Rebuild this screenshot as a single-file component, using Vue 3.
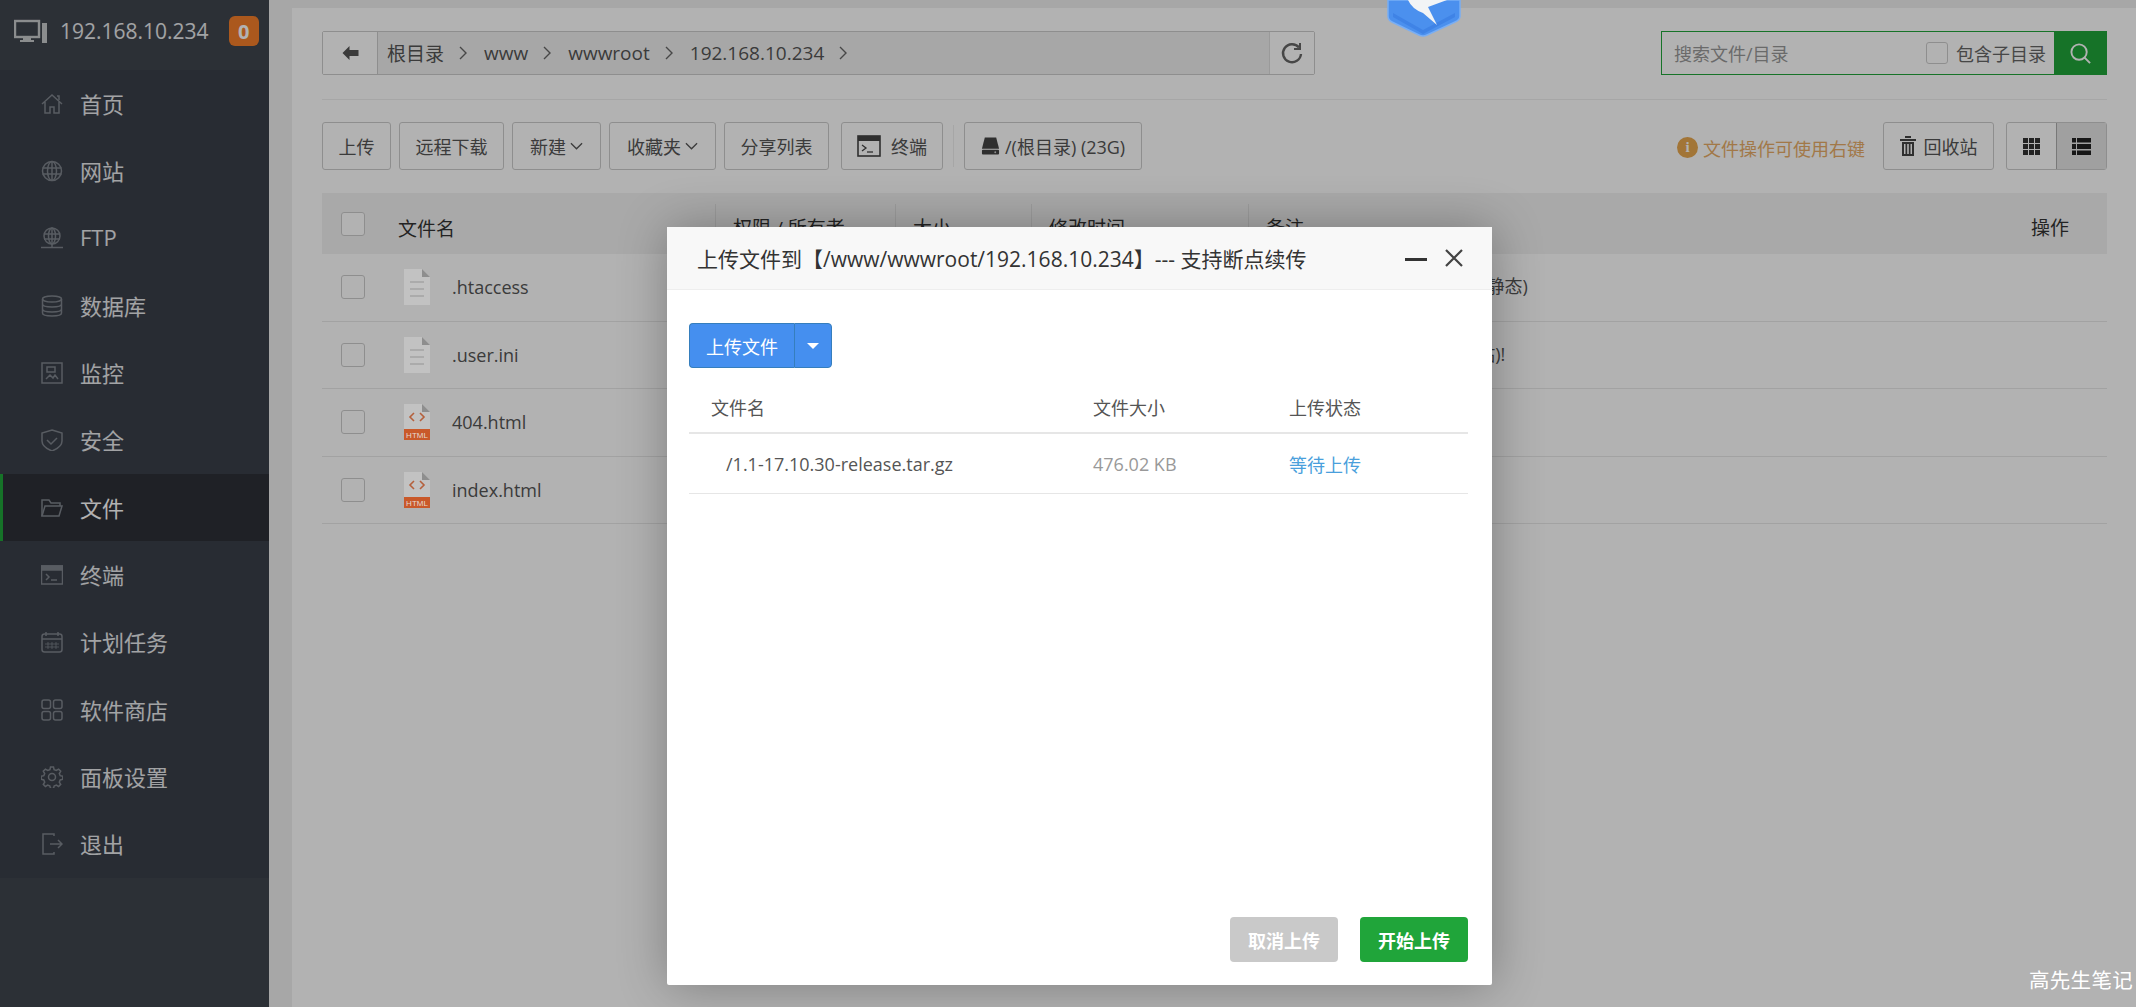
<template>
  <div class="page">
    <aside class="side">
      <div class="side-top">
        <svg class="pc" viewBox="0 0 34 24" width="34" height="24">
          <rect x="1" y="2" width="24" height="16" fill="none" stroke="currentColor" stroke-width="2.4" />
          <rect x="9" y="18" width="8" height="3" fill="currentColor" />
          <rect x="6" y="21" width="14" height="2" fill="currentColor" />
          <rect x="28" y="4" width="5" height="20" fill="currentColor" />
        </svg>
        <span class="ip">192.168.10.234</span>
        <span class="badge">0</span>
      </div>
      <nav class="menu">
        <a v-for="m in menu" :key="m.name" class="menu-item" :class="{ active: m.name === '文件' }">
          <svg class="menu-ico" viewBox="0 0 22 22" width="22" height="22" fill="none" stroke="currentColor" stroke-width="1.5" v-html="m.icon"></svg>
          <span>{{ m.name }}</span>
        </a>
      </nav>
    </aside>

    <main class="main">
      <div class="panel">
        <div class="top-row">
          <div class="path">
            <button class="back">
              <svg viewBox="0 0 16 14" width="17" height="14"><path d="M0 7 7 0v4h9v6H7v4z" fill="#555" /></svg>
            </button>
            <div class="crumbs">
              <template v-for="c in crumbs" :key="c">
                <span class="crumb">{{ c }}</span>
                <svg class="chev" viewBox="0 0 8 14" width="8" height="14"><path d="M1 1l6 6-6 6" fill="none" stroke="#666" stroke-width="1.4" /></svg>
              </template>
            </div>
            <button class="refresh">
              <svg viewBox="0 0 24 24" width="24" height="24" fill="none" stroke="#666" stroke-width="2.4">
                <path d="M19 6.5A9 9 0 1 0 21 13" />
                <path d="M20 2v6h-6" stroke-width="2" />
              </svg>
            </button>
          </div>
          <div class="search">
            <input class="search-input" placeholder="搜索文件/目录" />
            <span class="check small"></span>
            <span class="sub">包含子目录</span>
            <span class="search-btn">
              <svg viewBox="0 0 24 24" width="23" height="23" fill="none" stroke="#fff" stroke-width="2">
                <circle cx="10.5" cy="10.5" r="8" />
                <path d="M16 16l6 6" />
              </svg>
            </span>
          </div>
        </div>

        <div class="tools">
          <button class="btn">上传</button>
          <button class="btn">远程下载</button>
          <button class="btn narrow">新建
            <svg viewBox="0 0 14 8" width="13" height="8"><path d="M1 1l6 6 6-6" fill="none" stroke="#555" stroke-width="1.4" /></svg>
          </button>
          <button class="btn narrow">收藏夹
            <svg viewBox="0 0 14 8" width="13" height="8"><path d="M1 1l6 6 6-6" fill="none" stroke="#555" stroke-width="1.4" /></svg>
          </button>
          <button class="btn">分享列表</button>
          <button class="btn term">
            <svg viewBox="0 0 24 22" width="24" height="22">
              <rect x="1" y="1" width="22" height="20" fill="none" stroke="#444" stroke-width="1.6" />
              <rect x="1" y="1" width="22" height="5" fill="#444" />
              <path d="M5 10l4 3-4 3" fill="none" stroke="#444" stroke-width="1.3" />
              <path d="M10 17h6" stroke="#444" stroke-width="1.3" />
            </svg>
            终端
          </button>
          <span class="sep"></span>
          <button class="btn disk">
            <svg viewBox="0 0 20 18" width="19" height="18">
              <path d="M4 0h12l3 12H1z" fill="#444" />
              <rect x="1" y="13" width="18" height="5" rx="1" fill="#444" />
              <circle cx="15" cy="15.500" r="1" fill="#ccc" />
            </svg>
            /(根目录) (23G)
          </button>
          <span class="hint">
            <i class="hint-ico">i</i>
            文件操作可使用右键
          </span>
          <button class="btn bin">
            <svg viewBox="0 0 16 20" width="16" height="20" fill="#444">
              <rect x="5" y="0" width="6" height="2" />
              <rect x="0" y="3" width="16" height="2" />
              <path d="M2 6h12v14H2zM4 8v10h1.500V8zM7.200 8v10h1.600V8zM10.500 8v10H12V8z" fill-rule="evenodd" />
            </svg>
            回收站
          </button>
          <div class="views">
            <span class="view">
              <svg viewBox="0 0 17 17" width="17" height="17" fill="#333">
                <path d="M0 0h5v5H0zM6 0h5v5H6zM12 0h5v5h-5zM0 6h5v5H0zM6 6h5v5H6zM12 6h5v5h-5zM0 12h5v5H0zM6 12h5v5H6zM12 12h5v5h-5z" />
              </svg>
            </span>
            <span class="view on">
              <svg viewBox="0 0 19 17" width="19" height="17" fill="#222">
                <path d="M0 0h4v4.500H0zM5 0h14v4.500H5zM0 6h4v5H0zM5 6h14v5H5zM0 12.500h4V17H0zM5 12.500h14V17H5z" />
              </svg>
            </span>
          </div>
        </div>

        <div class="table">
          <div class="row head">
            <span class="cell-check"><span class="check"></span></span>
            <span class="head-name">文件名</span>
            <span class="col">权限 / 所有者</span>
            <span class="col">大小</span>
            <span class="col">修改时间</span>
            <span class="col">备注</span>
            <span class="col last">操作</span>
          </div>
          <div v-for="f in files" :key="f.name" class="row">
            <span class="cell-check"><span class="check"></span></span>
            <span class="file">
              <svg class="file-ico" viewBox="0 0 26 36" width="26" height="36">
                <path d="M0 0h18l8 8v28H0z" fill="#c2c2c2" />
                <path d="M18 0l8 8h-8z" fill="#8e8e8e" />
                <template v-if="f.html">
                  <path d="M10 9l-4 4 4 4M16 9l4 4-4 4" fill="none" stroke="#b5603c" stroke-width="1.600" />
                  <rect y="25" width="26" height="11" fill="#c9592a" />
                  <text x="13" y="34" text-anchor="middle" font-size="8" fill="#e4d8d0" font-family="Liberation Sans, sans-serif">HTML</text>
                </template>
                <path v-else d="M6 13h14M6 20h14M6 27h14" stroke="#a4a4a4" stroke-width="1.500" />
              </svg>
              {{ f.name }}
            </span>
            <span class="col"></span>
            <span class="col"></span>
            <span class="col"></span>
            <span class="col remark">{{ f.remark }}</span>
          </div>
        </div>
      </div>
    </main>

    <div class="shade"></div>

    <svg class="logo" viewBox="0 0 78 38" width="78" height="38">
      <path d="M3 0v16q0 4 4 6l27 13q4 2 8 0l28-13q5-2 5-6V0z" fill="#4b90ee" stroke="#78aef5" stroke-width="1.500" />
      <path d="M8 13l30 17 32-17v4L38 34 8 17z" fill="#3f83e6" />
      <path d="M23 0q4 9 15 13l14 12-9-18 19-7z" fill="#f2f4f6" />
    </svg>

    <section class="dialog">
      <header class="dialog-title">
        <span>上传文件到【/www/wwwroot/192.168.10.234】--- 支持断点续传</span>
        <span class="dialog-min"></span>
        <svg class="dialog-close" viewBox="0 0 20 20" width="20" height="20">
          <path d="M2 2l16 16M18 2L2 18" stroke="#444" stroke-width="2.200" />
        </svg>
      </header>
      <div class="dialog-body">
        <div class="split">
          <button class="split-main">上传文件</button>
          <button class="split-drop"><i class="caret"></i></button>
        </div>
        <div class="up-row up-head">
          <span>文件名</span>
          <span>文件大小</span>
          <span>上传状态</span>
        </div>
        <div class="up-row up-item">
          <span class="up-name">/1.1-17.10.30-release.tar.gz</span>
          <span class="up-size">476.02 KB</span>
          <span class="up-state">等待上传</span>
        </div>
        <div class="dialog-foot">
          <button class="foot-btn cancel">取消上传</button>
          <button class="foot-btn start">开始上传</button>
        </div>
      </div>
    </section>

    <div class="mark">高先生笔记</div>
  </div>
</template>

<script setup>
const menu = [
  { name: '首页', icon: '<path d="M1 11 11 2l10 9M4 9v11h5v-6h4v6h5V9"/><path d="M16 3h2v4"/>' },
  { name: '网站', icon: '<circle cx="11" cy="11" r="9.500"/><ellipse cx="11" cy="11" rx="4.500" ry="9.500"/><path d="M1.500 8h19M1.500 14h19M11 1v20"/>' },
  { name: 'FTP', icon: '<circle cx="11" cy="9" r="8"/><ellipse cx="11" cy="9" rx="3.500" ry="8"/><path d="M3 7h16M3 12h16M11 1v16M0 20.500h22M11 17v3"/>' },
  { name: '数据库', icon: '<ellipse cx="11" cy="4" rx="9.500" ry="3"/><path d="M1.500 4v14c0 2 4 3 9.500 3s9.500-1 9.500-3V4M1.500 9c0 2 4 3 9.500 3s9.500-1 9.500-3M1.500 14c0 2 4 3 9.500 3s9.500-1 9.500-3"/>' },
  { name: '监控', icon: '<rect x="1" y="1" width="20" height="20"/><path d="M6 5h8v5H6zM5 17l4-4 3 3 2-3 3 4"/>' },
  { name: '安全', icon: '<path d="M11 1l10 3v8c0 5-5 8-10 10C6 20 1 17 1 12V4z"/><path d="M6 11l4 4 6-6"/>' },
  { name: '文件', icon: '<path d="M1 19V3h7l2 3h9v3"/><path d="M1 19l3-10h17l-3 10z"/>' },
  { name: '终端', icon: '<rect x="0.500" y="2" width="21" height="18"/><rect x="0.500" y="2" width="21" height="4" fill="currentColor"/><path d="M5 10l3 3-3 3M10 16h6"/>' },
  { name: '计划任务', icon: '<rect x="1" y="3" width="20" height="18" rx="2.500"/><path d="M5 1v4M17 1v4M1 8h20"/><path d="M7 11v7M11 11v7M15 11v7M4 13h14M4 16h14" stroke-width="0.800"/>' },
  { name: '软件商店', icon: '<rect x="1" y="1" width="8.500" height="8.500" rx="2"/><rect x="12.500" y="1" width="8.500" height="8.500" rx="2"/><rect x="1" y="12.500" width="8.500" height="8.500" rx="2"/><rect x="12.500" y="12.500" width="8.500" height="8.500" rx="2"/>' },
  { name: '面板设置', icon: '<circle cx="11" cy="11" r="3.500"/><path d="M9.500 1h3l.6 2.600 2.200.9 2.300-1.400 2.100 2.100-1.400 2.300.9 2.200 2.600.6v3l-2.600.6-.9 2.200 1.400 2.300-2.100 2.100-2.300-1.400-2.200.9-.6 2.600h-3l-.6-2.600-2.200-.9-2.300 1.400-2.100-2.100 1.400-2.300-.9-2.200-2.600-.6v-3l2.600-.6.9-2.200-1.400-2.300 2.100-2.100 2.300 1.400 2.200-.9z"/>' },
  { name: '退出', icon: '<path d="M13 3V1H2v20h11v-2"/><path d="M9 11h12M17 7l4 4-4 4"/>' }
]

const crumbs = ['根目录', 'www', 'wwwroot', '192.168.10.234']

const files = [
  { name: '.htaccess', remark: 'Apache用户配置文件(伪静态)', html: false },
  { name: '.user.ini', remark: 'PHP用户配置文件(防跨站)!', html: false },
  { name: '404.html', remark: '', html: true },
  { name: 'index.html', remark: '', html: true }
]
</script>

<style>
html, body {
  margin: 0;
  height: 100%;
  overflow: hidden;
}
</style>

<style scoped>
.page {
  position: relative;
  display: flex;
  width: 2136px;
  height: 1007px;
  overflow: hidden;
  background: #f0f0f0;
  font-family: "Open Sans", "Noto Sans CJK SC", sans-serif;
  color: #555;
  font-size: 18px;
}
button {
  font: inherit;
  color: inherit;
  background: none;
  padding: 0;
  cursor: pointer;
}

.side {
  width: 269px;
  flex: none;
  background: #40454e;
  color: #e8eaec;
}
.side-top {
  height: 70px;
  box-sizing: border-box;
  padding: 0 0 8px 14px;
  display: flex;
  align-items: center;
}
.pc {
  color: #c8cacc;
}
.ip {
  margin-left: 12px;
  font-size: 21px;
}
.badge {
  margin-left: 20px;
  width: 30px;
  height: 30px;
  border-radius: 6px;
  background: #f57f2a;
  color: #fff;
  font-weight: 700;
  font-size: 20px;
  display: flex;
  align-items: center;
  justify-content: center;
}
.menu {
  background: #3a3f49;
}
.menu-item {
  height: 67.330px;
  display: flex;
  align-items: center;
  padding-left: 41px;
  gap: 17px;
  font-size: 22px;
  box-sizing: border-box;
}
.menu-item span {
  margin-top: -2px;
}
.menu-ico {
  color: #7f858d;
}
.menu-item.active {
  background: #2d3037;
  border-left: 3px solid #20a53a;
  padding-left: 38px;
  color: #fff;
}

.main {
  flex: 1;
  min-width: 0;
  padding: 8px 0 0 23px;
}
.panel {
  height: 100%;
  box-sizing: border-box;
  background: #fff;
  padding: 23px 29px 0 30px;
}
.top-row {
  display: flex;
  justify-content: space-between;
  padding-bottom: 24px;
  border-bottom: 1px solid #eee;
}
.path {
  width: 993px;
  height: 44px;
  box-sizing: border-box;
  display: flex;
  border: 1px solid #ccc;
  border-radius: 2px;
  background: #f0f0f0;
}
.back {
  width: 55px;
  border: 0;
  border-right: 1px solid #ccc;
  background: #fff;
}
.crumbs {
  flex: 1;
  display: flex;
  align-items: center;
  padding-left: 9px;
  font-size: 19px;
}
.chev {
  margin: 0 17px 0 15px;
}
.refresh {
  width: 45px;
  border: 0;
  border-left: 1px solid #ddd;
  background: #fff;
  display: flex;
  align-items: center;
  justify-content: center;
}
.search {
  width: 446px;
  height: 44px;
  box-sizing: border-box;
  display: flex;
  align-items: center;
  border: 1px solid #20a53a;
}
.search-input {
  flex: 1;
  min-width: 0;
  border: 0;
  outline: 0;
  background: none;
  font: inherit;
  padding: 2px 0 0 12px;
}
.search-input::placeholder {
  color: #999;
}
.check {
  display: block;
  width: 24px;
  height: 24px;
  box-sizing: border-box;
  border: 1px solid #ccc;
  border-radius: 3px;
  background: #fff;
}
.check.small {
  width: 22px;
  height: 22px;
}
.sub {
  margin: 0 8px;
  white-space: nowrap;
  color: #666;
}
.search-btn {
  width: 52px;
  align-self: stretch;
  background: #20a53a;
  display: flex;
  align-items: center;
  justify-content: center;
}

.tools {
  display: flex;
  align-items: center;
  gap: 8px;
  margin-top: 22px;
  height: 48px;
}
.btn {
  height: 48px;
  box-sizing: border-box;
  padding: 0 15.500px;
  display: flex;
  align-items: center;
  gap: 4px;
  border: 1px solid #ccc;
  border-radius: 3px;
  white-space: nowrap;
}
.narrow {
  padding: 0 17px;
}
.term {
  margin-left: 4px;
  padding: 0 15px;
  gap: 10px;
}
.sep {
  width: 1px;
  height: 42px;
  margin: 0 2px;
  background: #eee;
}
.disk {
  padding: 0 16px;
  gap: 5px;
}
.hint {
  margin-left: auto;
  margin-right: 10px;
  padding-top: 3px;
  display: flex;
  align-items: center;
  gap: 5px;
  color: #e8ad68;
}
.hint-ico {
  width: 21px;
  height: 21px;
  border-radius: 50%;
  background: #e8a850;
  color: #fff;
  font: 700 15px "Liberation Serif", serif;
  display: flex;
  align-items: center;
  justify-content: center;
}
.bin {
  gap: 8px;
}
.views {
  margin-left: 4px;
  display: flex;
  width: 101px;
  height: 48px;
  box-sizing: border-box;
  border: 1px solid #ccc;
  border-radius: 3px;
}
.view {
  flex: 1;
  display: flex;
  align-items: center;
  justify-content: center;
}
.view.on {
  background: #e6e6e6;
  border-left: 1px solid #adadad;
}

.table {
  margin-top: 23px;
}
.row {
  display: grid;
  grid-template-columns: 64px 329px 180px 136px 217px 333px 1fr;
  height: 67.500px;
  align-items: center;
  border-bottom: 1px solid #e8e8e8;
  box-sizing: border-box;
}
.head {
  height: 61px;
  background: #f3f3f3;
  border: 0;
  color: #333;
  font-size: 19px;
}
.cell-check {
  padding-left: 19px;
}
.head-name {
  margin: 8px 0 0 12px;
}
.col {
  padding-left: 17px;
  border-left: 1px solid #e0e0e0;
  height: 50px;
  line-height: 48px;
  align-self: end;
  white-space: nowrap;
}
.row:not(.head) .col {
  border: 0;
  align-self: center;
}
.col.last {
  text-align: right;
  padding-right: 38px;
  border-left: 0;
}
.row:not(.head) .remark {
  padding-left: 45px;
}
.file {
  display: flex;
  align-items: center;
  gap: 22px;
  margin-left: 18px;
}
/* icon sits above the shade: it reads lighter than the dimmed row in the reference */
.file-ico {
  position: relative;
  z-index: 1;
}

.shade {
  position: absolute;
  inset: 0;
  background: rgba(0, 0, 0, 0.3);
}
.logo {
  position: absolute;
  left: 1385px;
  top: 0;
  z-index: 2;
}
.mark {
  position: absolute;
  right: 3px;
  bottom: 13px;
  z-index: 2;
  color: #fff;
  font-size: 20.500px;
  letter-spacing: 0.300px;
}

.dialog {
  position: absolute;
  left: 667px;
  top: 227px;
  z-index: 2;
  width: 825px;
  height: 758px;
  display: flex;
  flex-direction: column;
  background: #fff;
  border-radius: 2px;
  box-shadow: 1px 1px 50px rgba(0, 0, 0, 0.3);
  color: #333;
}
.dialog-title {
  height: 62px;
  flex: none;
  display: flex;
  align-items: center;
  padding-left: 30px;
  background: #f8f8f8;
  border-bottom: 1px solid #eee;
  font-size: 21px;
}
.dialog-min {
  width: 22px;
  height: 3px;
  background: #333;
  margin-left: auto;
  margin-top: 2px;
}
.dialog-close {
  margin: 0 28px 0 17px;
}
.dialog-body {
  flex: 1;
  display: flex;
  flex-direction: column;
  padding: 33px 24px 23px 22px;
}
.split {
  display: flex;
  height: 45px;
  color: #fff;
}
.split-main,
.split-drop {
  border: 1px solid #357ebd;
  background: #458fef;
  color: #fff;
  height: 45px;
}
.split-main {
  width: 105px;
  border-radius: 4px 0 0 4px;
  border-right: 0;
}
.split-drop {
  width: 38px;
  border-radius: 0 4px 4px 0;
  display: flex;
  align-items: center;
  justify-content: center;
}
.caret {
  border: 6px solid transparent;
  border-top-color: #fff;
  border-bottom: 0;
}
.up-row {
  display: grid;
  grid-template-columns: 382px 196px 1fr;
  align-items: center;
  padding-left: 22px;
  box-sizing: border-box;
  border-bottom: 1px solid #e6e6e6;
}
.up-head {
  margin-top: 14px;
  height: 52px;
  color: #555;
  border-bottom-width: 2px;
}
.up-item {
  height: 60px;
}
.up-name {
  padding-left: 15px;
  color: #555;
}
.up-size {
  color: #999;
}
.up-state {
  color: #4a9fdc;
}
.dialog-foot {
  margin-top: auto;
  display: flex;
  justify-content: flex-end;
  gap: 22px;
}
.foot-btn {
  width: 108px;
  height: 45px;
  border: 0;
  border-radius: 4px;
  color: #fff;
  font-weight: 700;
}
.cancel {
  background: #c9c9c9;
}
.start {
  background: #20a53a;
}
</style>
